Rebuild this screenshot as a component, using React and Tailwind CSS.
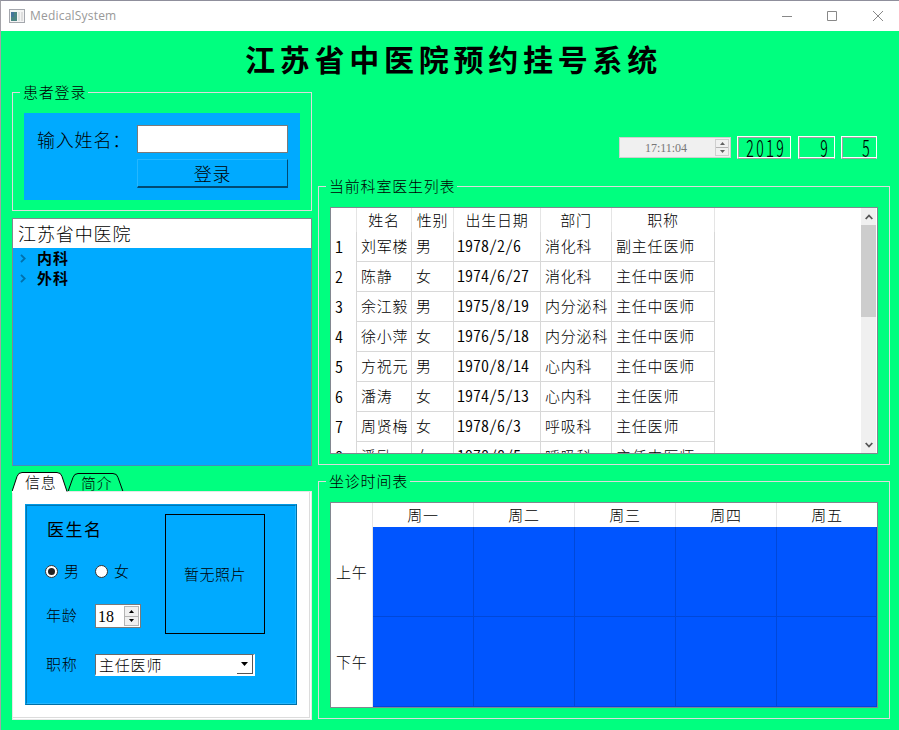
import React from "react";

const doctors = [
  ["刘军楼", "男", "1978/2/6", "消化科", "副主任医师"],
  ["陈静", "女", "1974/6/27", "消化科", "主任中医师"],
  ["余江毅", "男", "1975/8/19", "内分泌科", "主任中医师"],
  ["徐小萍", "女", "1976/5/18", "内分泌科", "主任中医师"],
  ["方祝元", "男", "1970/8/14", "心内科", "主任中医师"],
  ["潘涛", "女", "1974/5/13", "心内科", "主任医师"],
  ["周贤梅", "女", "1978/6/3", "呼吸科", "主任医师"],
  ["潘励", "女", "1978/8/5", "呼吸科", "主任中医师"],
];
const days = ["周一", "周二", "周三", "周四", "周五"];
const grid = "grid grid-cols-[26px_55px_42px_87px_71px_103px]";

function GroupBox({ title, className, children }) {
  return (
    <section className={"relative border border-[#dcdcdc] " + className}>
      <h2 className="absolute -top-[11px] left-[7px] h-5 bg-[#00ff7f] pl-[3px] pr-[2px] text-[15px] leading-[19px] tracking-[0.8px] whitespace-nowrap">
        {title}
      </h2>
      {children}
    </section>
  );
}

function Steppers({ color, className }) {
  return (
    <div className={"flex flex-col border border-[#b4b4b4] bg-[#f0f0f0] " + className}>
      <span className="flex flex-1 items-center justify-center border-b border-[#b4b4b4]">
        <svg width="5" height="3"><path d="M0 3L2.5 0L5 3Z" fill={color} /></svg>
      </span>
      <span className="flex flex-1 items-center justify-center">
        <svg width="5" height="3"><path d="M0 0L2.5 3L5 0Z" fill={color} /></svg>
      </span>
    </div>
  );
}

function Lcd({ value, className }) {
  return (
    <div className={"h-[23px] border border-white border-b-[#a0a0a0] " + className}>
      <div className="flex h-[21px] items-center justify-end border-b border-l border-t border-t-[#a0a0a0] border-l-[#a0a0a0] border-b-white pr-[4px]">
        <span className="origin-center scale-y-[1.5] text-[16px] leading-[13px] tracking-[2px] [font-family:'Noto_Sans_CJK_SC',sans-serif] font-light [font-feature-settings:'hwid']">
          {value}
        </span>
      </div>
    </div>
  );
}

function TreeItem({ label }) {
  return (
    <div className="flex h-5 items-center pl-[7px] text-[15px] font-bold leading-5 tracking-[1px]">
      <svg width="6" height="9" viewBox="0 0 6 9" fill="none" stroke="#0070ac" strokeWidth="1.8"><path d="M1 .8L4.7 4.5L1 8.2" /></svg>
      <span className="ml-[11px]">{label}</span>
    </div>
  );
}

function Radio({ checked, label }) {
  return (
    <label className="flex h-5 w-[50px] items-center">
      <span className="flex size-[13px] items-center justify-center rounded-full border border-[#333] bg-white">
        {checked && <span className="size-[7px] rounded-full bg-[#222]" />}
      </span>
      <span className="ml-[6px] text-[15px] leading-5">{label}</span>
    </label>
  );
}

export default function App() {
  return (
    <div className="flex h-[730px] w-[899px] flex-col overflow-hidden border-l border-t border-l-[#a3a3a8] border-t-[#8f8f9c] bg-[#00ff7f] text-black [font-family:'Noto_Sans_CJK_SC',sans-serif] font-light">
      <header className="flex h-[30px] shrink-0 items-center bg-white pl-2">
        <svg width="16" height="14" viewBox="0 0 16 14">
          <rect x=".5" y=".5" width="15" height="13" fill="#f4f4f4" stroke="#a4a7ad" />
          <rect x="2" y="3" width="6" height="9" fill="#4b8583" />
          <rect x="2" y="3" width="3" height="5" fill="#44759a" />
          <rect x="9" y="3" width="2" height="9" fill="#dfe2e0" />
          <rect x="12" y="3" width="2" height="9" fill="#dedede" />
        </svg>
        <span className="ml-[5px] text-[12px] font-normal tracking-[0.2px] text-[#999] [font-family:'Open_Sans','Noto_Sans',sans-serif]">MedicalSystem</span>
        <svg className="ml-auto mr-[15px]" width="102" height="12" fill="none" stroke="#888" strokeWidth="1">
          <path d="M0 6.5H10M45.5 1.5H54.5V10.5H45.5Z" />
          <path d="M91 1L101 11M101 1L91 11" />
        </svg>
      </header>

      <h1 className="h-[61px] shrink-0 pl-[244px] pt-[6px] text-[30px] font-bold leading-[42px] tracking-[4.75px] whitespace-nowrap">
        江苏省中医院预约挂号系统
      </h1>

      <main className="flex gap-[6px] pl-[11px]">
        <div className="flex w-[300px] shrink-0 flex-col">
          <GroupBox title="患者登录" className="h-[119px] pl-[11px] pt-[20px]">
            <div className="flex h-[87px] w-[276px] bg-[#00aaff] pl-[13px] pt-3">
              <label className="w-[100px] shrink-0 text-[18px] leading-7 tracking-[0.8px] whitespace-nowrap">输入姓名：</label>
              <div className="flex w-[151px] flex-col gap-[6px]">
                <div className="h-7 border border-[#7a7a7a] bg-white" />
                <button className="h-[29px] border border-b-2 border-[#25b7ff] border-b-[#004a73] border-r-[#004a73] text-[18px] leading-[24px] tracking-[0.8px]">登录</button>
              </div>
            </div>
          </GroupBox>

          <div className="mt-[7px] h-[248px] border border-[#828790] border-b-[#3f8fbd] bg-[#00aaff]">
            <div className="h-[29px] bg-white pl-[5px] text-[18px] leading-[29px] tracking-[0.9px]">江苏省中医院</div>
            <TreeItem label="内科" />
            <TreeItem label="外科" />
          </div>

          <div className="relative z-10 mt-[6px] flex h-5 text-[15px] leading-5 tracking-[0.8px]">
            <div className="relative h-5 w-[56px] pl-[13px]">
              <svg className="absolute left-0 top-0" width="56" height="21"><path d="M0 19.5L5 4.5Q6.2 .5 10 .5H45Q49 .5 50 4.5L55 19.5V21H0Z" fill="white" /><path d="M.2 19L5 4.5Q6.2 .5 10 .5H45Q49 .5 50 4.5L55 19.5" fill="none" stroke="black" /></svg>
              <span className="relative">信息</span>
            </div>
            <div className="relative h-5 w-[56px] pl-[13px] pt-px">
              <svg className="absolute left-0 top-0" width="56" height="20"><path d="M.2 19L5 5.5Q6.2 1.5 10 1.5H45Q49 1.5 50 5.5L54.8 19" fill="none" stroke="black" /></svg>
              <span className="relative">简介</span>
            </div>
          </div>

          <div className="-mt-px h-[229px] border border-[#e6e6e6] bg-white pb-px pr-px">
            <div className="h-full border-b border-r border-[#dcdcdc] pl-3 pt-3">
              <div className="h-[201px] w-[272px] border border-[#0099e5] border-b-[#006fa6] border-r-[#006fa6]">
                <div className="flex h-[199px] w-[270px] border border-[#0077b3] border-b-[#25b7ff] border-r-[#25b7ff] bg-[#00aaff]">
                  <div className="w-[138px] shrink-0 pl-[18px] text-[15px] tracking-[0.8px]">
                    <div className="mt-[11px] h-6 pl-[2px] text-[17px] font-normal leading-6 tracking-[1.5px]">医生名</div>
                    <div className="mt-[20px] flex">
                      <Radio checked label="男" />
                      <Radio label="女" />
                    </div>
                    <div className="mt-[23px] flex h-6">
                      <span className="w-[50px] pl-px leading-[21px]">年龄</span>
                      <div className="flex h-6 w-[46px] border border-[#7a7a7a] bg-white">
                        <span className="w-7 pl-[2px] text-[16px] font-normal leading-[23px] tracking-normal [font-family:'Liberation_Serif',serif]">18</span>
                        <Steppers color="black" className="my-px w-[15px]" />
                      </div>
                    </div>
                    <div className="mt-[26px] flex h-[22px] w-[220px]">
                      <span className="w-[50px] shrink-0 pl-px leading-5">职称</span>
                      <div className="flex h-[22px] w-[160px] border border-b-2 border-r-2 border-l-[#696969] border-t-[#696969] border-b-white border-r-white bg-white">
                        <span className="w-[141px] pl-[3px] leading-[20px]">主任医师</span>
                        <span className="flex h-[19px] w-[16px] items-center justify-center border-b border-r border-[#555]">
                          <svg width="7" height="4"><path d="M0 0H7L3.5 4Z" /></svg>
                        </span>
                      </div>
                    </div>
                  </div>
                  <div className="mt-2 flex h-[120px] w-[100px] items-center justify-center border border-black text-[15px] tracking-[0.5px]">
                    暂无照片
                  </div>
                </div>
              </div>
            </div>
          </div>
        </div>

        <div className="flex w-[572px] flex-col">
          <div className="ml-[301px] mt-[44px] flex h-[23px] gap-[6px]">
            <div className="mt-px flex h-[21px] w-[112px] border border-[#cfcfcf] bg-[#f0f0f0]">
              <span className="w-[95px] pr-[3px] text-center text-[12px] font-normal leading-5 text-[#777] [font-family:'Liberation_Serif',serif]">17:11:04</span>
              <Steppers color="#606060" className="my-px w-[14px] !border-[#cfcfcf]" />
            </div>
            <Lcd value="2019" className="w-[54px]" />
            <Lcd value="9" className="ml-px w-[37px]" />
            <Lcd value="5" className="w-[36px]" />
          </div>

          <GroupBox title="当前科室医生列表" className="mt-[27px] h-[279px] pl-[11px] pt-[20px]">
            <div className="flex h-[247px] w-[548px] overflow-hidden border border-[#828790] bg-white text-[15px] tracking-[0.8px]">
              <div className="w-[530px]">
                <div className={grid + " h-6 w-[384px] text-center leading-[23px]"}>
                  {["", "姓名", "性别", "出生日期", "部门", "职称"].map((h) => (
                    <span key={h} className="h-6 border-r border-[#e5e5e5]">{h}</span>
                  ))}
                </div>
                {doctors.map((row, i) => (
                  <div key={row[0]} className={grid + " h-[30px] w-[384px] leading-7"}>
                    <span className="border-r border-[#d8d8d8] pl-1 text-[16px] font-[350] leading-[28px] tracking-normal [font-feature-settings:'hwid']">{i + 1}</span>
                    {row.map((cell, j) => (
                      <span key={j} className={"border-b border-r border-[#d8d8d8] whitespace-nowrap " + (j === 2 ? "pl-[3px] text-[16px] font-[350] leading-[27px] tracking-normal [font-feature-settings:'hwid']" : "pl-1")}>{cell}</span>
                    ))}
                  </div>
                ))}
              </div>
              <div className="mr-px flex w-[15px] flex-col items-center bg-[#f0f0f0]">
                <svg className="mt-[6px] shrink-0" width="8" height="6" fill="none" stroke="#555" strokeWidth="1.8"><path d="M.7 5L4 1.5L7.3 5" /></svg>
                <div className="mt-[5px] h-[92px] w-[15px] shrink-0 bg-[#cdcdcd]" />
                <svg className="mb-[5px] mt-auto shrink-0" width="8" height="6" fill="none" stroke="#555" strokeWidth="1.8"><path d="M.7 1L4 4.5L7.3 1" /></svg>
              </div>
            </div>
          </GroupBox>

          <GroupBox title="坐诊时间表" className="mt-[16px] h-[238px] pl-[11px] pt-[20px]">
            <div className="h-[206px] w-[548px] border border-[#828790] bg-white text-[15px] tracking-[0.8px]">
              <div className="grid h-6 grid-cols-[42px_101px_101px_101px_101px_100px] text-center leading-6">
                <span className="border-r border-[#e5e5e5]" />
                {days.map((d) => (
                  <span key={d} className="border-r border-[#e5e5e5] last:border-r-0">{d}</span>
                ))}
              </div>
              {["上午", "下午"].map((t) => (
                <div key={t} className="grid h-[90px] grid-cols-[42px_101px_101px_101px_101px_100px]">
                  <span className="border-r border-[#e5e5e5] pl-[5px] leading-[90px]">{t}</span>
                  {days.map((d) => (
                    <span key={d} className="border-b border-r border-[#0048d9] bg-[#0055ff]" />
                  ))}
                </div>
              ))}
            </div>
          </GroupBox>
        </div>
      </main>
    </div>
  );
}
